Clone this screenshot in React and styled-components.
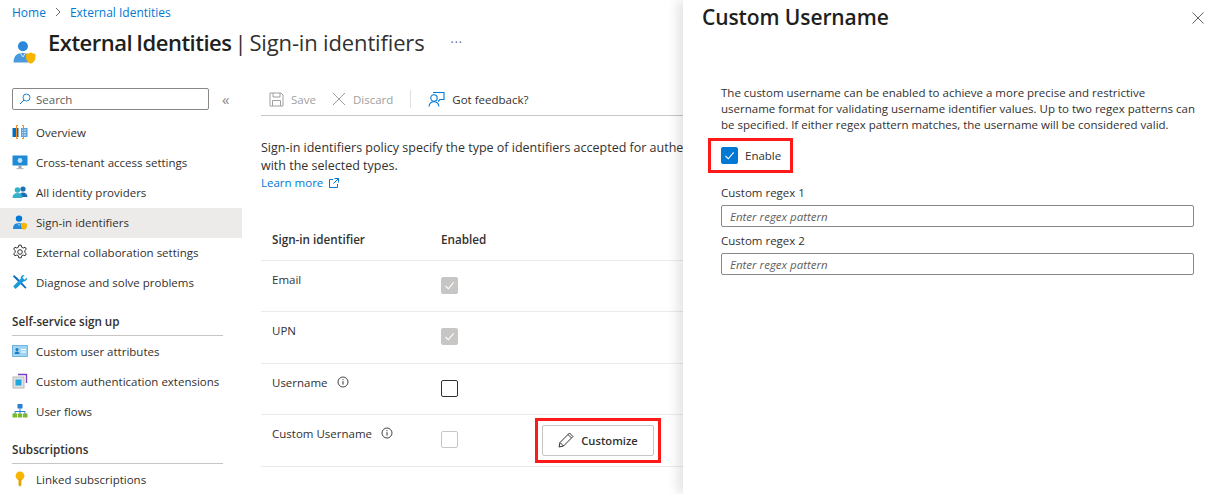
import React from 'react';
import styled, { createGlobalStyle } from 'styled-components';

const GlobalStyle = createGlobalStyle`
  html, body {
    margin: 0;
    padding: 0;
    height: 494px;
    overflow: hidden;
    background: #fff;
    font-family: "Open Sans", "Noto Sans", sans-serif;
    font-size: 11.5px;
    color: #323130;
  }
  * { box-sizing: border-box; }
`;

const Page = styled.div`
  position: relative;
  width: 1226px;
  height: 494px;
  overflow: hidden;
`;

const Breadcrumb = styled.div`
  display: flex;
  align-items: center;
  gap: 8px;
  height: 24px;
  padding-left: 12px;
  font-size: 12px;
  color: #0078d4;
`;

const Chevron = styled.svg`
  width: 8px;
  height: 10px;
`;

const TitleRow = styled.div`
  display: flex;
  align-items: center;
  height: 38px;
  padding: 0 0 2px 12px;
`;

const TitleIcon = styled.svg`
  width: 25px;
  height: 25px;
  align-self: flex-end;
  margin-bottom: -4px;
`;

const Title = styled.h1`
  margin: 0 0 0 11px;
  font-size: 22px;
  font-weight: 400;
  letter-spacing: -0.15px;
  white-space: nowrap;
  color: #323130;
  strong { font-weight: 600; letter-spacing: -0.5px; word-spacing: -1px; color: #201f1e; }
`;

const TitlePipe = styled.span`
  margin: 0 3px;
`;

const More = styled.span`
  margin-left: 26px;
  font-size: 12px;
  letter-spacing: 1px;
  color: #605e5c;
`;

const Body = styled.div`
  display: flex;
  margin-top: 22px;
`;

const Sidebar = styled.nav`
  width: 242px;
  flex-shrink: 0;
  padding-top: 4px;
`;

const SearchRow = styled.div`
  display: flex;
  align-items: center;
  padding-left: 12px;
  margin-bottom: 8px;
`;

const SearchBox = styled.div`
  display: flex;
  align-items: center;
  gap: 5px;
  width: 197px;
  height: 22px;
  padding-left: 6px;
  border: 1px solid #8a8886;
  border-radius: 2px;
  color: #605e5c;
`;

const Collapse = styled.span`
  margin-left: 13px;
  font-size: 15px;
  line-height: 18px;
  color: #8a8886;
`;

const NavItem = styled.div`
  display: flex;
  align-items: center;
  gap: 8px;
  height: 30px;
  padding: 0 0 2px 12px;
  white-space: nowrap;
  background: ${p => (p.$active ? '#edebe9' : 'transparent')};
`;

const NavIcon = styled.svg`
  width: 16px;
  height: 16px;
  flex-shrink: 0;
`;

const SectionHead = styled.div`
  width: 211px;
  margin: ${p => p.$top || 15}px 0 1px 12px;
  padding-bottom: 6px;
  line-height: 16px;
  font-size: 11.7px;
  font-weight: 600;
  border-bottom: 1px solid #c8c6c4;
`;

const Main = styled.main`
  flex: 1;
  min-width: 0;
  margin-left: 19px;
  padding-top: 1px;
`;

const Toolbar = styled.div`
  display: flex;
  align-items: center;
  height: 31px;
  padding: 0 0 2px 8px;
  border-bottom: 1px solid #c8c6c4;
`;

const ToolButton = styled.span`
  display: flex;
  align-items: center;
  gap: 7px;
  margin-right: ${p => p.$gap || 16}px;
  color: ${p => (p.$disabled ? '#a19f9d' : '#323130')};
`;

const ToolDivider = styled.span`
  width: 1px;
  height: 18px;
  margin-right: 17px;
  background: #e1dfdd;
`;

const Intro = styled.p`
  margin: 23px 0 0;
  font-size: 12.5px;
  line-height: 17.5px;
  white-space: nowrap;
`;

const TextLink = styled.a`
  display: inline-flex;
  align-items: center;
  gap: 6px;
  font-size: 11.5px;
  color: #0078d4;
`;

const Table = styled.div`
  margin-top: 26px;
`;

const Row = styled.div`
  display: grid;
  grid-template-columns: 169px 94px auto;
  height: ${p => p.$height || 51.5}px;
  padding-left: 11px;
  border-bottom: 1px solid #edebe9;
`;

const HeadCell = styled.div`
  align-self: center;
  font-size: 11.7px;
  font-weight: 600;
`;

const LabelCell = styled.div`
  display: flex;
  align-items: flex-start;
  gap: 9px;
  padding-top: 11px;
`;

const CheckCell = styled.div`
  padding-top: 16px;
`;

const Box = styled.span`
  display: flex;
  align-items: center;
  justify-content: center;
  width: 17px;
  height: 17px;
  border-radius: 2px;
  border: 1px solid ${p => (p.$variant === 'empty' ? '#323130' : p.$variant === 'on' ? '#0078d4' : '#c8c6c4')};
  background: ${p => (p.$variant === 'on' ? '#0078d4' : p.$variant === 'locked' ? '#c8c6c4' : '#fff')};
`;

const Highlight = styled.div`
  align-self: center;
  justify-self: start;
  padding: 4px;
  border: 3px solid #ff1a1a;
`;

const CustomizeButton = styled.span`
  display: flex;
  align-items: center;
  justify-content: center;
  gap: 7px;
  width: 112px;
  height: 31px;
  border: 1px solid #c8c6c4;
  border-radius: 2px;
  font-size: 11.2px;
  font-weight: 600;
`;

const Panel = styled.aside`
  position: absolute;
  top: 0;
  right: 0;
  bottom: 0;
  width: 543px;
  padding: 0 32px 0 38px;
  background: #fff;
  box-shadow: -6px 0 10px rgba(0, 0, 0, 0.1);
`;

const PanelTitle = styled.h2`
  margin: 3px 0 0 -19px;
  font-size: 21px;
  line-height: 28px;
  font-weight: 600;
  letter-spacing: -0.1px;
  color: #201f1e;
`;

const CloseIcon = styled.svg`
  position: absolute;
  top: 12px;
  right: 22px;
  width: 12px;
  height: 12px;
`;

const PanelText = styled.p`
  margin: 54px 0 0;
  line-height: 16px;
  white-space: nowrap;
`;

const EnableBox = styled.div`
  display: flex;
  align-items: center;
  gap: 7px;
  width: 85px;
  height: 35px;
  margin: 5px 0 0 -13px;
  padding-left: 10px;
  border: 3px solid #ff1a1a;
`;

const FieldLabel = styled.label`
  display: block;
  line-height: 16px;
  margin-bottom: 4px;
  margin-top: ${p => p.$top}px;
`;

const FieldInput = styled.div`
  width: 473px;
  height: 22px;
  padding-left: 8px;
  line-height: 21px;
  border: 1px solid #8a8886;
  border-radius: 2px;
  font-style: italic;
  color: #605e5c;
`;

const Info = () => (
  <svg width="12" height="12" viewBox="0 0 12 12" fill="none" style={{ marginTop: 1 }}>
    <circle cx="6" cy="6" r="5" stroke="#323130" strokeWidth="0.9" />
    <path d="M6 5.2v3.4M6 3.2v1" stroke="#323130" strokeWidth="1" />
  </svg>
);

const Tick = ({ color }) => (
  <svg width="11" height="11" viewBox="0 0 11 11" fill="none">
    <path d="M1.5 6l2.8 2.8 5.4-6.4" stroke={color} strokeWidth="1.1" />
  </svg>
);

const Person = ({ fill = '#0078d4' }) => (
  <>
    <circle cx="7" cy="4.6" r="3.2" fill={fill} />
    <path d="M1 15c0-4 2-6 6-6s6 2 6 6z" fill={fill} opacity="0.85" />
    <path d="M5.5 9.2L7 11.5l1.5-2.3" stroke="#fff" strokeWidth="0.5" fill="none" />
  </>
);

const Shield = () => (
  <path d="M9 9.5c1.5 0 2.6-.5 3-1 .5.5 1.5 1 3 1v2.5c0 2-1.5 3.2-3 3.8-1.5-.6-3-1.8-3-3.8z" fill="#f7b500" />
);

const icons = {
  overview: (
    <>
      <rect x="0.5" y="4" width="6" height="9" fill="#0072c6" />
      <rect x="9" y="4" width="6.5" height="9" fill="#5ea0d8" />
      <path d="M10 6h4M10 8.5h4M10 11h4" stroke="#fff" strokeWidth="0.8" />
      <path d="M6 1.5H4.5v13H6M10 1.5h1.5v13H10" stroke="#f08a24" strokeWidth="1" fill="none" />
    </>
  ),
  tenant: (
    <>
      <rect x="0.5" y="1.5" width="15" height="10" rx="0.5" fill="#1f8ad6" />
      <circle cx="8" cy="6.5" r="2.4" fill="#bfe3fa" />
      <rect x="6.5" y="11.5" width="3" height="2.5" fill="#9aa0a6" />
      <rect x="4.5" y="14" width="7" height="1.2" fill="#b9bcc0" />
    </>
  ),
  providers: (
    <>
      <circle cx="11" cy="5" r="2.6" fill="#1a6fb5" />
      <path d="M7 13c0-3 1.6-4.6 4-4.6s4.5 1.6 4.5 4.6z" fill="#1a6fb5" />
      <circle cx="5.5" cy="6" r="2.8" fill="#35b1c9" />
      <path d="M0.5 14c0-3.4 2-5 5-5s5 1.6 5 5z" fill="#35b1c9" />
    </>
  ),
  signin: (
    <>
      <Person />
      <Shield />
    </>
  ),
  gear: (
    <>
      <circle cx="8" cy="8" r="2.3" fill="none" stroke="#323130" strokeWidth="1" />
      <path
        d="M6.8 1.2h2.4l.4 2 1.6.8 1.9-.8 1.2 2-1.5 1.4v1.8l1.5 1.4-1.2 2-1.9-.8-1.6.8-.4 2H6.8l-.4-2-1.6-.8-1.9.8-1.2-2 1.5-1.4V6.6L1.7 5.2l1.2-2 1.9.8 1.6-.8z"
        fill="none"
        stroke="#323130"
        strokeWidth="1"
      />
    </>
  ),
  tools: (
    <>
      <path d="M2 1l3 2.5 9.5 10-1.2 1.3L3.5 5 1 2.5z" fill="#0a6ebd" />
      <path d="M15 3.5l-2.5 2.2-2-2L12.5 1c-2.2-.4-4 1.3-3.7 3.5L1.2 12.5 3.6 15l7.8-7.6c2.3.3 4-1.6 3.6-3.9z" fill="#1a9ad6" />
    </>
  ),
  card: (
    <>
      <rect x="0.5" y="2.5" width="15" height="11" fill="#9fd4f2" stroke="#5ea9dc" strokeWidth="0.8" />
      <circle cx="5" cy="6.5" r="1.5" fill="#1a78c2" />
      <path d="M2.5 11c0-1.8 1-2.6 2.5-2.6s2.500.8 2.500 2.600z" fill="#1a78c2" />
      <path d="M9 6.500h5M9 9h5" stroke="#fff" strokeWidth="1" />
    </>
  ),
  extension: (
    <>
      <path d="M6 1.500h8.500V10" fill="none" stroke="#7a3fc4" strokeWidth="1.400" />
      <rect x="1" y="4" width="11" height="11" fill="#dfe1e3" stroke="#b6b9bc" strokeWidth="1" />
      <rect x="3.500" y="6.500" width="6" height="6" fill="#1fa8e0" />
    </>
  ),
  flows: (
    <>
      <rect x="5.500" y="1" width="5" height="4.500" fill="#2a7fd0" />
      <path d="M8 5.500v3M3 11V8.500h10V11M8 8.500V11" stroke="#2a7fd0" strokeWidth="1" fill="none" />
      <rect x="0.500" y="10.500" width="4.500" height="4" fill="#7ab82e" />
      <rect x="5.750" y="10.500" width="4.500" height="4" fill="#7ab82e" />
      <rect x="11" y="10.500" width="4.500" height="4" fill="#7ab82e" />
    </>
  ),
  key: (
    <>
      <circle cx="8" cy="4.800" r="4.400" fill="#f7b500" />
      <path d="M6.500 8h3v3l-.8.800.8.800v.9L8 15.800 6.500 14.200z" fill="#e5a100" />
    </>
  ),
};

const Item = ({ icon, active, children }) => (
  <NavItem $active={active}>
    <NavIcon viewBox="0 0 16 16">{icons[icon]}</NavIcon>
    {children}
  </NavItem>
);

const App = () => (
  <Page>
    <GlobalStyle />
    <Breadcrumb>
      <span>Home</span>
      <Chevron viewBox="0 0 8 10" fill="none">
        <path d="M2 1l4 4-4 4" stroke="#605e5c" strokeWidth="0.9" />
      </Chevron>
      <span>External Identities</span>
    </Breadcrumb>
    <TitleRow>
      <TitleIcon viewBox="0 0 16 16">
        <Person fill="#2b88d8" />
        <Shield />
      </TitleIcon>
      <Title>
        <strong>External Identities</strong><TitlePipe>|</TitlePipe>Sign-in identifiers
      </Title>
      <More>···</More>
    </TitleRow>
    <Body>
      <Sidebar>
        <SearchRow>
          <SearchBox>
            <svg width="12" height="12" viewBox="0 0 12 12" fill="none">
              <circle cx="7.500" cy="4.500" r="3.500" stroke="#0078d4" strokeWidth="0.9" />
              <path d="M5 7L1 11" stroke="#0078d4" strokeWidth="1" />
            </svg>
            Search
          </SearchBox>
          <Collapse>«</Collapse>
        </SearchRow>
        <Item icon="overview">Overview</Item>
        <Item icon="tenant">Cross-tenant access settings</Item>
        <Item icon="providers">All identity providers</Item>
        <Item icon="signin" active>Sign-in identifiers</Item>
        <Item icon="gear">External collaboration settings</Item>
        <Item icon="tools">Diagnose and solve problems</Item>
        <SectionHead>Self-service sign up</SectionHead>
        <Item icon="card">Custom user attributes</Item>
        <Item icon="extension">Custom authentication extensions</Item>
        <Item icon="flows">User flows</Item>
        <SectionHead $top={14}>Subscriptions</SectionHead>
        <Item icon="key">Linked subscriptions</Item>
      </Sidebar>
      <Main>
        <Toolbar>
          <ToolButton $disabled>
            <svg width="15" height="15" viewBox="0 0 15 15" fill="none" stroke="#a19f9d">
              <path d="M1 1h11l2 2v11H1zM4 1v4h7V1M3.500 14V8.500h8V14" />
            </svg>
            Save
          </ToolButton>
          <ToolButton $disabled $gap={17}>
            <svg width="14" height="14" viewBox="0 0 14 14" fill="none" stroke="#a19f9d">
              <path d="M1 1l12 12M13 1L1 13" />
            </svg>
            Discard
          </ToolButton>
          <ToolDivider />
          <ToolButton>
            <svg width="17" height="17" viewBox="0 0 17 17" fill="none" stroke="#0078d4" strokeWidth="1.100">
              <circle cx="6" cy="7" r="3.200" />
              <path d="M1 15.500c.3-3 2-4.800 5-4.800s4.500 1.800 5 4.800M5 1.500h11v7h-4l-2 2" />
            </svg>
            Got feedback?
          </ToolButton>
        </Toolbar>
        <Intro>
          Sign-in identifiers policy specify the type of identifiers accepted for authentication
          <br />
          with the selected types.
          <br />
          <TextLink>
            Learn more
            <svg width="10" height="10" viewBox="0 0 10 10" fill="none" stroke="#0078d4">
              <path d="M4 1.500H.500v8h8V6M5.500.500h4v4M9.500.500L4.500 5.500" />
            </svg>
          </TextLink>
        </Intro>
        <Table>
          <Row $height={43}>
            <HeadCell>Sign-in identifier</HeadCell>
            <HeadCell>Enabled</HeadCell>
          </Row>
          <Row>
            <LabelCell>Email</LabelCell>
            <CheckCell>
              <Box $variant="locked"><Tick color="#fff" /></Box>
            </CheckCell>
          </Row>
          <Row>
            <LabelCell>UPN</LabelCell>
            <CheckCell>
              <Box $variant="locked"><Tick color="#fff" /></Box>
            </CheckCell>
          </Row>
          <Row>
            <LabelCell>Username <Info /></LabelCell>
            <CheckCell>
              <Box $variant="empty" />
            </CheckCell>
          </Row>
          <Row>
            <LabelCell>Custom Username <Info /></LabelCell>
            <CheckCell>
              <Box $variant="off" />
            </CheckCell>
            <Highlight>
              <CustomizeButton>
                <svg width="16" height="16" viewBox="0 0 16 16" fill="none" stroke="#323130">
                  <path d="M1 15l1-4.500L11.500 1l3.500 3.500L5.500 14zM2 10.500L5.500 14M10 2.500L13.500 6" />
                </svg>
                Customize
              </CustomizeButton>
            </Highlight>
          </Row>
        </Table>
      </Main>
    </Body>
    <Panel>
      <PanelTitle>Custom Username</PanelTitle>
      <CloseIcon viewBox="0 0 12 12" fill="none" stroke="#605e5c">
        <path d="M.5.500l11 11M11.500.500l-11 11" />
      </CloseIcon>
      <PanelText>
        The custom username can be enabled to achieve a more precise and restrictive
        <br />
        username format for validating username identifier values. Up to two regex patterns can
        <br />
        be specified. If either regex pattern matches, the username will be considered valid.
      </PanelText>
      <EnableBox>
        <Box $variant="on"><Tick color="#fff" /></Box>
        Enable
      </EnableBox>
      <FieldLabel $top={12}>Custom regex 1</FieldLabel>
      <FieldInput>Enter regex pattern</FieldInput>
      <FieldLabel $top={6}>Custom regex 2</FieldLabel>
      <FieldInput>Enter regex pattern</FieldInput>
    </Panel>
  </Page>
);

export default App;
